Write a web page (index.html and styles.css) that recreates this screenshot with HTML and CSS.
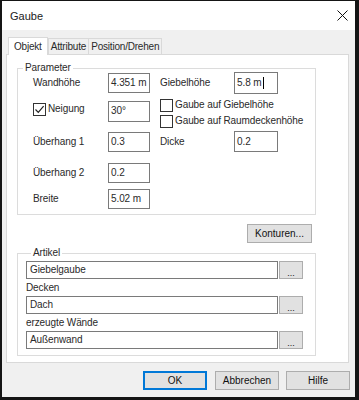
FILE: index.html
```html
<!DOCTYPE html>
<html lang="de">

<head>
  <meta charset="UTF-8">
  <title>Gaube</title>
  <link rel="stylesheet" href="styles.css">
</head>

<body>
  <div class="window">
    <div class="titlebar">
      <span class="title">Gaube</span>
      <svg class="close" width="11" height="11" viewBox="0 0 11 11">
        <path d="M0.5 0.5 L10.5 10.5 M10.5 0.5 L0.5 10.5" stroke="#111" stroke-width="1" fill="none" />
      </svg>
    </div>

    <div class="body">
      <div class="tabs">
        <div class="tab active">Objekt</div>
        <div class="tab">Attribute</div>
        <div class="tab">Position/Drehen</div>
      </div>

      <div class="panel">
        <fieldset class="group params">
          <legend>Parameter</legend>
          <div class="grid">
            <label class="lbl r1 c1">Wandhöhe</label>
            <div class="field r1 c2 left">4.351 m</div>
            <label class="lbl r1 c3">Giebelhöhe</label>
            <div class="field r1 c4 right tall">5.8 m<span class="caret"></span></div>

            <label class="lbl r2 c1 check-lbl neig"><span class="box checked">
                <svg width="11" height="11" viewBox="0 0 11 11">
                  <path d="M1.5 5.5 L4.3 8.3 L9.6 2.2" stroke="#222" stroke-width="1.2" fill="none" />
                </svg></span>Neigung</label>
            <div class="field r2 c2 left neig-field">30°</div>
            <div class="checks r2 c3">
              <label class="check-lbl"><span class="box"></span>Gaube auf Giebelhöhe</label>
              <label class="check-lbl"><span class="box"></span>Gaube auf Raumdeckenhöhe</label>
            </div>

            <label class="lbl r3 c1">Überhang 1</label>
            <div class="field r3 c2 left">0.3</div>
            <label class="lbl r3 c3">Dicke</label>
            <div class="field r3 c4 right">0.2</div>

            <label class="lbl r4 c1">Überhang 2</label>
            <div class="field r4 c2 left">0.2</div>

            <label class="lbl r5 c1">Breite</label>
            <div class="field r5 c2 left">5.02 m</div>
          </div>
        </fieldset>

        <div class="contour-row">
          <button class="btn contour">Konturen...</button>
        </div>

        <fieldset class="group articles">
          <legend>Artikel</legend>
          <div class="pick">
            <div class="pick-field">Giebelgaube</div>
            <button class="btn dots">...</button>
          </div>
          <div class="caption">Decken</div>
          <div class="pick">
            <div class="pick-field">Dach</div>
            <button class="btn dots">...</button>
          </div>
          <div class="caption">erzeugte Wände</div>
          <div class="pick">
            <div class="pick-field">Außenwand</div>
            <button class="btn dots">...</button>
          </div>
        </fieldset>
      </div>

      <div class="actions">
        <button class="btn action default">OK</button>
        <button class="btn action">Abbrechen</button>
        <button class="btn action">Hilfe</button>
      </div>
    </div>
  </div>
</body>

</html>
```

FILE: styles.css
```css
* {
  box-sizing: border-box;
}

body {
  margin: 0;
  font-family: "Liberation Sans", Arial, sans-serif;
  font-size: 10px;
  letter-spacing: -0.1px;
  color: #2a2a2a;
  background: #fff;
}

.window {
  width: 359px;
  height: 400px;
  border-left: 2px solid #151515;
  border-right: 4px solid #151515;
  border-top: 1px solid #151515;
  border-bottom: 3px solid #151515;
  background: #f0f0f0;
  display: flex;
  flex-direction: column;
}

.titlebar {
  height: 29px;
  background: #fff;
  display: flex;
  align-items: center;
  justify-content: space-between;
  padding: 0 7px 0 8px;
}

.title {
  font-size: 11px;
  letter-spacing: 0;
  color: #222;
}

.body {
  flex: 1;
  display: flex;
  flex-direction: column;
  padding-top: 7px;
}

/* tabs */
.tabs {
  display: flex;
  align-items: flex-end;
  padding-left: 6px;
  height: 17px;
  position: relative;
  z-index: 1;
}

.tab {
  height: 16px;
  line-height: 15px;
  padding: 0 2px;
  border: 1px solid #d9d9d9;
  border-bottom: none;
  background: #f0f0f0;
  margin-right: -1px;
  letter-spacing: -0.2px;
}

.tab.active {
  height: 18px;
  line-height: 17px;
  padding: 0 5px;
  background: #fff;
  margin-bottom: -1px;
  margin-right: 0;
}

.panel {
  margin: 0 6px 0 4px;
  height: 309px;
  background: #fff;
  border: 1px solid #d9d9d9;
  padding: 0 32px 0 10px;
}

/* group boxes */
.group {
  border: 1px solid #dcdcdc;
  margin: 0;
  padding: 0;
}

.group legend {
  padding: 0 2px;
  margin-left: 5px;
  line-height: 10px;
}

.params {
  margin-top: 8px;
  height: 152px;
}

.grid {
  display: grid;
  grid-template-columns: 75px 42px 10px 74px 44px;
  grid-template-rows: 26px 33px 31px 26px 20px;
  padding-left: 15px;
  margin-top: -1px;
}

.c1 { grid-column: 1; }
.c2 { grid-column: 2; }
.c3 { grid-column: 4; }
.c4 { grid-column: 5; }
.r1 { grid-row: 1; }
.r2 { grid-row: 2; }
.r3 { grid-row: 3; }
.r4 { grid-row: 4; }
.r5 { grid-row: 5; }

.lbl {
  align-self: start;
  line-height: 21px;
}

.field {
  align-self: start;
  height: 21px;
  border: 1px solid #7a7a7a;
  padding: 0 2px;
  line-height: 19px;
  background: #fff;
  white-space: nowrap;
}

.field.left {
  margin-top: 1px;
  height: 20px;
  line-height: 18px;
}

.field.tall {
  height: 22px;
  line-height: 20px;
  display: flex;
  align-items: center;
}

.caret {
  display: inline-block;
  width: 1px;
  height: 12px;
  background: #000;
  margin-left: 1px;
}

.field.neig-field {
  margin-top: 3px;
  height: 21px;
}

.checks {
  grid-column: 4 / span 3;
  display: flex;
  flex-direction: column;
  gap: 2px;
  white-space: nowrap;
}

.check-lbl {
  display: flex;
  align-items: center;
  height: 14px;
  line-height: 14px;
}

.box {
  width: 13px;
  height: 13px;
  border: 1px solid #333;
  background: #fff;
  margin-right: 2px;
  display: inline-flex;
  align-items: center;
  justify-content: center;
  flex: none;
}

.lbl.neig {
  height: 14px;
  margin-top: 4px;
}

/* buttons */
.btn {
  font: inherit;
  letter-spacing: 0;
  color: #111;
  background: #e1e1e1;
  border: 1px solid #adadad;
  padding: 0;
  margin: 0;
}

.contour-row {
  display: flex;
  justify-content: flex-end;
  padding-right: 4px;
  margin-top: 9px;
}

.contour {
  width: 65px;
  height: 19px;
}

.articles {
  margin-top: 5px;
  height: 108px;
  padding: 0 12px 0 8px;
}

.pick {
  display: flex;
  height: 18px;
}

.articles .pick:first-of-type {
  margin-top: 3px;
}

.pick-field {
  flex: 1;
  border: 1px solid #7a7a7a;
  line-height: 16px;
  padding: 0 3px;
}

.dots {
  width: 24px;
  margin-left: 1px;
  font-size: 9px;
  line-height: 16px;
  padding-top: 3px;
}

.caption {
  height: 17px;
  line-height: 17px;
}

.actions {
  display: flex;
  justify-content: flex-end;
  gap: 7px;
  padding: 8px 5px 0 0;
}

.action {
  width: 64px;
  height: 19px;
}

.action.default {
  border: 2px solid #0078d7;
  margin-right: 1px;
}
```
